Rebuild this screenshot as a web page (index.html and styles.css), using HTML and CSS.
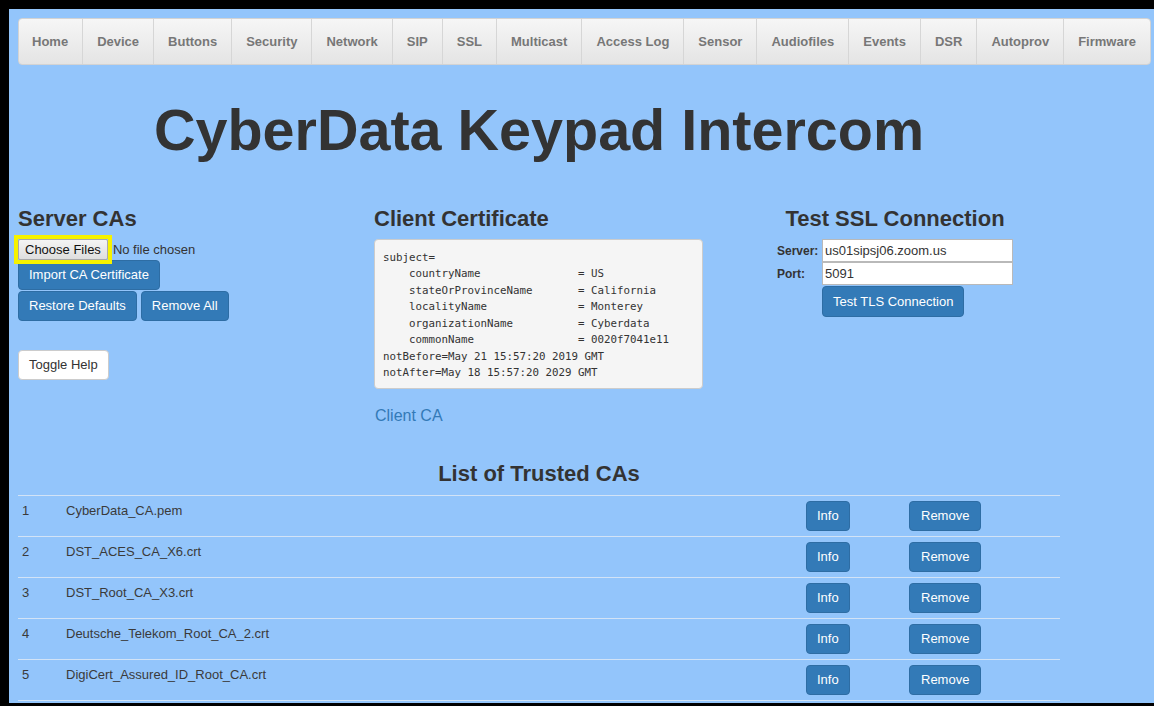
FILE: index.html
```html
<!DOCTYPE html>
<html lang="en">
<head>
<meta charset="utf-8">
<title>CyberData Keypad Intercom</title>
<link rel="stylesheet" href="styles.css">
</head>
<body>
<div class="frame">
  <nav class="navbar">
    <a class="nav-item" href="#">Home</a>
    <a class="nav-item" href="#">Device</a>
    <a class="nav-item" href="#">Buttons</a>
    <a class="nav-item" href="#">Security</a>
    <a class="nav-item" href="#">Network</a>
    <a class="nav-item" href="#">SIP</a>
    <a class="nav-item" href="#">SSL</a>
    <a class="nav-item" href="#">Multicast</a>
    <a class="nav-item" href="#">Access Log</a>
    <a class="nav-item" href="#">Sensor</a>
    <a class="nav-item" href="#">Audiofiles</a>
    <a class="nav-item" href="#">Events</a>
    <a class="nav-item" href="#">DSR</a>
    <a class="nav-item" href="#">Autoprov</a>
    <a class="nav-item" href="#">Firmware</a>
  </nav>

  <main class="content">
    <h1 class="title">CyberData Keypad Intercom</h1>

    <div class="columns">
      <section class="col">
        <h3 class="section-title">Server CAs</h3>
        <div class="file-row">
          <span class="file-mark"><button class="file-btn" type="button">Choose Files</button></span>
          <span class="file-name">No file chosen</span>
        </div>
        <div class="btn-line">
          <button class="btn btn-primary" type="button">Import CA Certificate</button>
        </div>
        <div class="btn-line btn-line-gap">
          <button class="btn btn-primary" type="button">Restore Defaults</button>
          <button class="btn btn-primary" type="button">Remove All</button>
        </div>
        <div class="help-line">
          <button class="btn btn-default" type="button">Toggle Help</button>
        </div>
      </section>

      <section class="col">
        <h3 class="section-title">Client Certificate</h3>
<pre class="cert">subject=
    countryName               = US
    stateOrProvinceName       = California
    localityName              = Monterey
    organizationName          = Cyberdata
    commonName                = 0020f7041e11
notBefore=May 21 15:57:20 2019 GMT
notAfter=May 18 15:57:20 2029 GMT</pre>
        <p class="client-ca"><a href="#">Client CA</a></p>
      </section>

      <section class="col col-test">
        <h3 class="section-title centered">Test SSL Connection</h3>
        <form class="ssl-form">
          <label class="ssl-label" for="server">Server:</label>
          <input class="ssl-input" id="server" type="text" value="us01sipsj06.zoom.us">
          <label class="ssl-label" for="port">Port:</label>
          <input class="ssl-input" id="port" type="text" value="5091">
          <span></span>
          <div class="ssl-action">
            <button class="btn btn-primary btn-tall" type="button">Test TLS Connection</button>
          </div>
        </form>
      </section>
    </div>

    <h3 class="section-title list-title">List of Trusted CAs</h3>
    <table class="ca-table">
      <colgroup>
        <col class="c-num"><col class="c-name"><col class="c-info"><col>
      </colgroup>
      <tbody>
        <tr>
          <td>1</td><td>CyberData_CA.pem</td>
          <td><button class="btn btn-primary" type="button">Info</button></td>
          <td><button class="btn btn-primary btn-wide" type="button">Remove</button></td>
        </tr>
        <tr>
          <td>2</td><td>DST_ACES_CA_X6.crt</td>
          <td><button class="btn btn-primary" type="button">Info</button></td>
          <td><button class="btn btn-primary btn-wide" type="button">Remove</button></td>
        </tr>
        <tr>
          <td>3</td><td>DST_Root_CA_X3.crt</td>
          <td><button class="btn btn-primary" type="button">Info</button></td>
          <td><button class="btn btn-primary btn-wide" type="button">Remove</button></td>
        </tr>
        <tr>
          <td>4</td><td>Deutsche_Telekom_Root_CA_2.crt</td>
          <td><button class="btn btn-primary" type="button">Info</button></td>
          <td><button class="btn btn-primary btn-wide" type="button">Remove</button></td>
        </tr>
        <tr>
          <td>5</td><td>DigiCert_Assured_ID_Root_CA.crt</td>
          <td><button class="btn btn-primary" type="button">Info</button></td>
          <td><button class="btn btn-primary btn-wide" type="button">Remove</button></td>
        </tr>
      </tbody>
    </table>
  </main>
</div>
</body>
</html>
```

FILE: styles.css
```css
* {
  box-sizing: border-box;
}

html,
body {
  margin: 0;
  padding: 0;
  background: #000;
}

body {
  font-family: "Liberation Sans", Arial, sans-serif;
  font-size: 13px;
  color: #333;
}

.frame {
  height: 706px;
  overflow: hidden;
  border-style: solid;
  border-color: #000;
  border-width: 9px 0 3px 9px;
  background: #93c5fb;
}

/* ---------- top navigation ---------- */
.navbar {
  display: flex;
  width: max-content;
  margin: 9px 0 0 9px;
  border: 1px solid #d3d3d3;
  border-radius: 4px;
  background: linear-gradient(to bottom, #f6f6f6 0%, #e4e4e4 100%);
}

.nav-item {
  display: block;
  padding: 15px 14px;
  line-height: 15px;
  font-size: 13px;
  font-weight: bold;
  color: #777;
  text-decoration: none;
  border-right: 1px solid #d6d6d6;
}

.nav-item:first-child {
  padding-left: 13px;
}

.nav-item:last-child {
  border-right: 0;
}

/* ---------- page body ---------- */
.content {
  width: 1042px;
  margin-left: 9px;
}

.title {
  margin: 33px 0 0;
  font-size: 57.5px;
  line-height: 64px;
  font-weight: bold;
  text-align: center;
  color: #333;
}

.columns {
  display: grid;
  grid-template-columns: 356px 356px 330px;
  margin-top: 44px;
}

.section-title {
  margin: 0 0 7px;
  font-size: 22px;
  line-height: 26px;
  font-weight: bold;
  color: #333;
}

.centered {
  text-align: center;
}

/* Server CAs */
.file-row {
  display: flex;
  align-items: center;
  height: 21px;
}

/* yellow highlight frame drawn over the file picker */
.file-mark {
  position: relative;
  z-index: 1;
  display: flex;
  margin: -4px 0 -4px -4px;
  border: 4px solid #f6f200;
}

.file-btn {
  height: 21px;
  padding: 0 6px;
  font-family: inherit;
  font-size: 13px;
  color: #111;
  border: 1px solid #a9a9a9;
  border-radius: 2px;
  background: linear-gradient(to bottom, #f4f4f4, #dedede);
}

.file-name {
  margin-left: 1px;
  color: #333;
}

.btn-line {
  display: flex;
  gap: 4px;
}

.btn-line-gap {
  margin-top: 1px;
}

.help-line {
  margin-top: 29px;
}

.btn {
  display: inline-block;
  padding: 5px 10px;
  font-family: inherit;
  font-size: 13px;
  line-height: 18px;
  border: 1px solid transparent;
  border-radius: 4px;
  cursor: pointer;
}

.btn-primary {
  color: #fff;
  background: #337ab7;
  border-color: #2e6da4;
}

.btn-default {
  color: #333;
  background: #fff;
  border-color: #ccc;
}

.btn-tall {
  padding-top: 6px;
  padding-bottom: 5px;
}

.btn-wide {
  padding-left: 11px;
  padding-right: 11px;
}

/* Client certificate */
.cert {
  width: 329px;
  height: 150px;
  margin: 0;
  padding: 9.5px 8px;
  font-family: "DejaVu Sans Mono", monospace;
  font-size: 10.8px;
  line-height: 16.5px;
  color: #333;
  background: #f5f5f5;
  border: 1px solid #ccc;
  border-radius: 4px;
  overflow: hidden;
}

.client-ca {
  margin: 17px 0 0 1px;
  font-size: 16px;
  line-height: 20px;
}

.client-ca a {
  color: #337ab7;
  text-decoration: none;
}

/* Test SSL connection */
.ssl-form {
  display: grid;
  grid-template-columns: 45px 191px;
  margin: 1px 0 0 47px;
  align-items: center;
}

.ssl-label {
  font-size: 12px;
  font-weight: bold;
  color: #333;
}

.ssl-input {
  width: 191px;
  height: 23px;
  padding: 0 2px;
  font-family: inherit;
  font-size: 13px;
  color: #333;
  border: 1px solid #b9b9b9;
  background: #fff;
}

.ssl-action {
  margin-top: 1px;
}

/* Trusted CA list */
.list-title {
  margin: 35px 0 8px;
  text-align: center;
}

.ca-table {
  width: 1042px;
  border-collapse: collapse;
  table-layout: fixed;
}

.c-num {
  width: 44px;
}

.c-name {
  width: 740px;
}

.c-info {
  width: 103px;
}

.ca-table td {
  padding: 5px 4px;
  line-height: 20px;
  vertical-align: top;
  font-size: 13px;
  color: #3a3a3a;
  border-top: 1px solid #d2e3f6;
}

.ca-table tr:last-child td {
  border-bottom: 1px solid #d2e3f6;
}
```
